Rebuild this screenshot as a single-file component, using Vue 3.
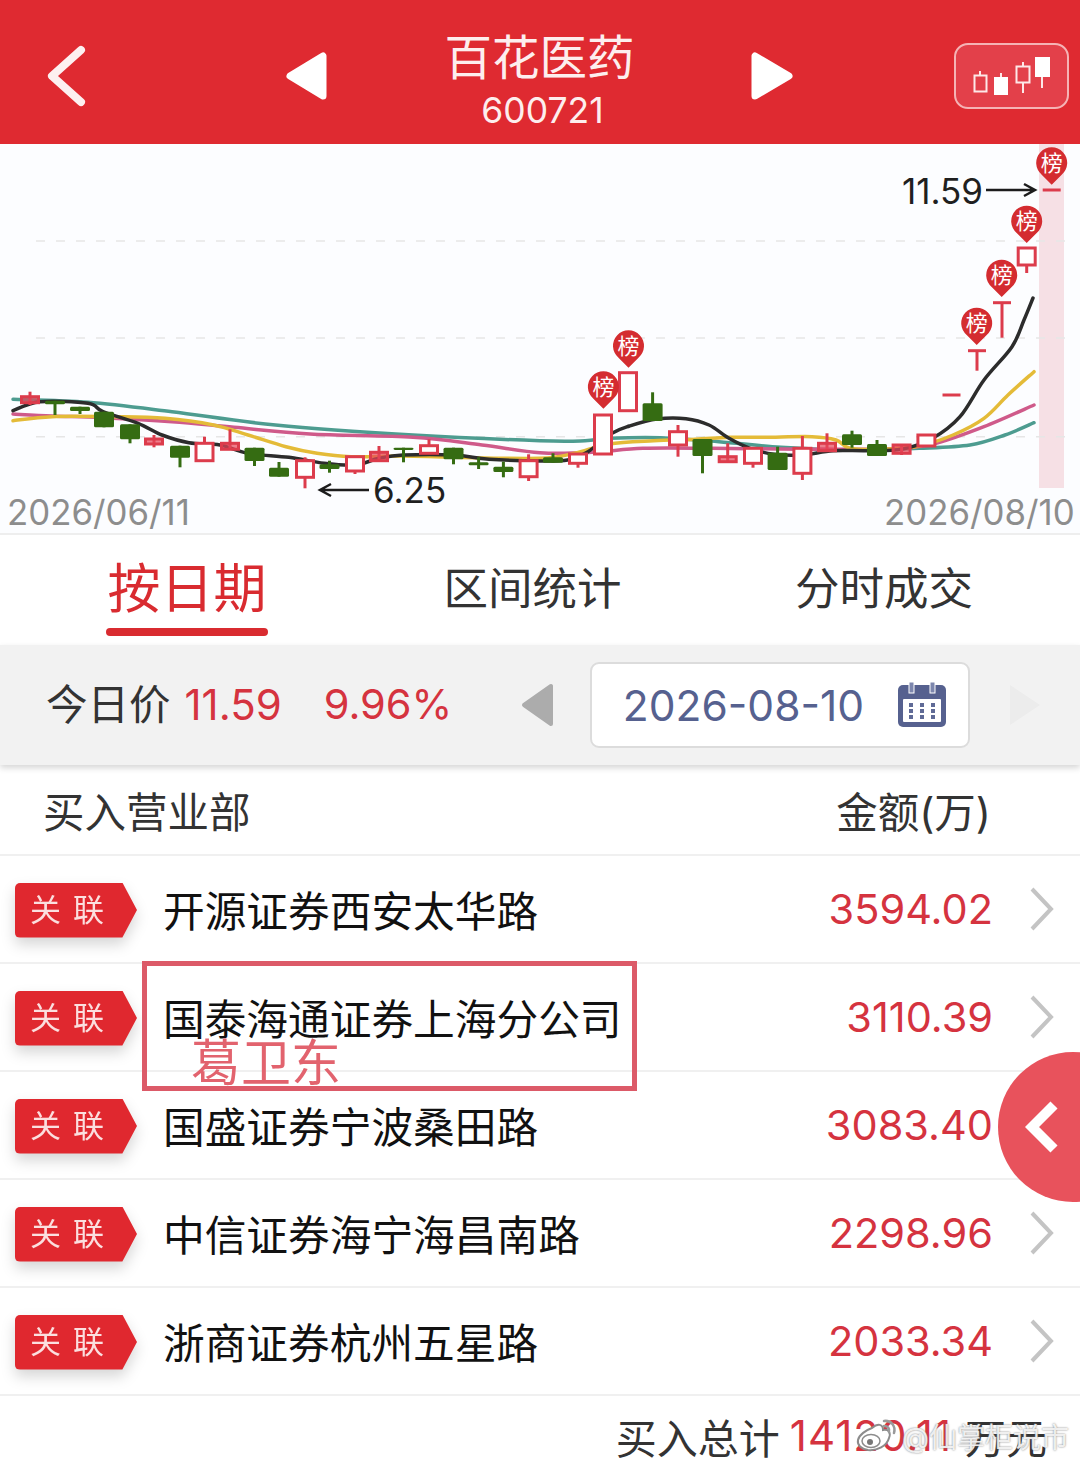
<script setup>
// g = green solid, h = hollow red, s = small red with see-through body
const candles = [
  [30, 396.7, 402.7, 391.7, 405, 's'], [55, 400.7, 404.3, 400.7, 415, 'g'], [80, 406.7, 411, 406.7, 414, 'g'],
  [104, 411.7, 427.3, 411.7, 427.3, 'g'], [130, 424.3, 439.3, 424.3, 443.3, 'g'], [154, 439, 444, 435, 447.3, 's'],
  [180, 445.7, 457.7, 445.7, 467.3, 'g'], [204.5, 443.3, 460.7, 436.7, 460.7, 'h'], [230, 443.3, 449.3, 429.3, 449.3, 's'],
  [254.5, 447.7, 461, 447.7, 466, 'g'], [279, 467.7, 476.7, 462, 476.7, 'g'], [305, 460.7, 477.3, 457.3, 488.3, 'h'],
  [329.5, 464.3, 469, 460.7, 472.7, 'g'], [355, 456.7, 471, 456.7, 474, 'h'], [379, 452.3, 460.7, 446, 460.7, 's'],
  [403.5, 447.7, 450, 447.7, 462.3, 'g'], [429, 445.7, 453.3, 439.3, 453.3, 'h'], [453.5, 447.7, 459.3, 447.7, 464.3, 'g'],
  [478.6, 462.3, 465.3, 457.3, 469, 'g'], [503.4, 466.7, 472, 461.7, 477.3, 'g'], [528.6, 460.7, 476.7, 454.3, 481, 'h'],
  [553, 457.3, 462.7, 453.3, 462.7, 'g'], [578, 454, 463.3, 454, 467.7, 'h'], [603, 415, 454, 415, 454, 'h'],
  [628, 372.7, 410.7, 372.7, 410.7, 'h'], [652.6, 403.3, 421, 392.3, 421, 'g'], [678, 431.7, 445, 425, 456.7, 'h'],
  [702.5, 439, 456, 439, 473.3, 'g'], [727.7, 456.7, 461.7, 443.3, 461.7, 's'], [753, 448.3, 463.3, 448.3, 467.7, 'h'],
  [777.6, 452.7, 470, 446.7, 470, 'g'], [802.4, 448.3, 473.3, 436, 480, 'h'], [827, 443.3, 450.7, 433.3, 450.7, 's'],
  [852, 434.3, 445, 430.7, 447.7, 'g'], [877, 444, 456, 440, 456, 'g'], [901.6, 445, 453.3, 445, 455, 's'],
  [926.4, 435, 446, 435, 446, 'h'], [951.5, 395, 395, 395, 395, 'h'], [977, 350.7, 350.7, 350.7, 370.7, 'h'],
  [1002, 302.7, 302.7, 302.7, 337.7, 'h'], [1026.7, 248, 265, 248, 273, 'h'], [1051.7, 190, 190, 190, 190, 'h'],
]

const lines = [
  { color: '#4d9c90', pts: [[13,399.3],[88,402.3],[172,411.7],[275.5,425],[413,435],[540,440.7],[585,440.7],[609,438.3],[660.5,437.7],[719,441.7],[781,447.3],[850,450],[919,448.3],[970,445],[1005,435],[1034,422.7]] },
  { color: '#cf5a8a', pts: [[13,414],[52,416],[103,417.7],[172,421.7],[234,427.3],[310,434],[413,437.3],[482,445],[540,452.7],[592,452.3],[643,448.3],[712,448.3],[781,449],[850,449.3],[901.6,448.3],[936,443.3],[984,426.7],[1034,405]] },
  { color: '#e4bb38', pts: [[13,420.7],[52,416.7],[113.6,416.7],[165,418.3],[213.5,425],[248,435],[286,446.7],[317,453.3],[351,456.7],[403,456],[454.5,457.3],[540,458.3],[574.4,453.3],[609,444],[653.6,440.7],[695,439.3],[729,437.3],[764,437.3],[812,436.7],[836,440],[850,448.3],[884,449.3],[919,446],[953,435],[984,418.3],[1008,395],[1034,371.7]] },
  { color: '#2c2c2c', pts: [[13,410.7],[40,401.7],[88,403.3],[103,411.7],[138,423.3],[162,435],[189,442.7],[220,445],[248,453.3],[289,457.3],[324,463.3],[355,465],[379,458.3],[403,455],[454.5,455],[489,459.3],[540,461],[567.5,460],[588,451.7],[612,433.3],[629.5,426],[657,419],[686,418.7],[709,425],[729,438.3],[750,448.3],[774,454.3],[802,455],[833,450.7],[867,450.7],[901.6,449.3],[932.6,438.3],[960,416.7],[984,380],[1012,346.7],[1024,320],[1033,298]] },
]

const pins = [[1051.7, 162.7], [1026.7, 221], [1001.7, 275], [976.7, 323], [628.5, 345.7], [603.4, 386.7]]

const rows = [
  { name: '开源证券西安太华路', amount: '3594.02' },
  { name: '国泰海通证券上海分公司', amount: '3110.39' },
  { name: '国盛证券宁波桑田路', amount: '3083.40' },
  { name: '中信证券海宁海昌南路', amount: '2298.96' },
  { name: '浙商证券杭州五星路', amount: '2033.34' },
]

function smooth(pts) {
  let d = `M${pts[0][0]} ${pts[0][1]}`
  for (let i = 0; i < pts.length - 1; i++) {
    const p0 = pts[i - 1] || pts[i]
    const p1 = pts[i]
    const p2 = pts[i + 1]
    const p3 = pts[i + 2] || p2
    const c1 = [p1[0] + (p2[0] - p0[0]) / 6, p1[1] + (p2[1] - p0[1]) / 6]
    const c2 = [p2[0] - (p3[0] - p1[0]) / 6, p2[1] - (p3[1] - p1[1]) / 6]
    d += ` C${c1[0]} ${c1[1]} ${c2[0]} ${c2[1]} ${p2[0]} ${p2[1]}`
  }
  return d
}

function pinPath(x, y) {
  const r = 15.5
  return `M${x - 10} ${y + 12} A${r} ${r} 0 1 1 ${x + 10} ${y + 12} L${x} ${y + 22} Z`
}
</script>

<template>
  <div class="page">
    <header class="topbar">
      <svg class="back" width="44" height="64" viewBox="0 0 44 64">
        <path d="M36 6 L7 32 L36 58" fill="none" stroke="#fdf0f0" stroke-width="8" stroke-linecap="round" stroke-linejoin="round" />
      </svg>
      <svg class="tri-left" width="44" height="50" viewBox="0 0 44 50">
        <path d="M39 5 V45 L6 25 Z" fill="#fff" stroke="#fff" stroke-width="7" stroke-linejoin="round" />
      </svg>
      <div class="title">
        <div class="title-name">百花医药</div>
        <div class="title-code">600721</div>
      </div>
      <svg class="tri-right" width="44" height="50" viewBox="0 0 44 50">
        <path d="M4 5 V45 L38 25 Z" fill="#fff" stroke="#fff" stroke-width="7" stroke-linejoin="round" />
      </svg>
      <div class="kline-btn">
        <svg width="115" height="66" viewBox="955 43 115 66">
          <path d="M981 71V75M1002 73V78M1024 62V66M1024 83V93M1043 77V88" stroke="#fde8e8" stroke-width="2" />
          <rect x="975.5" y="75.5" width="12" height="16" fill="none" stroke="#fde8e8" stroke-width="2" />
          <rect x="995" y="77" width="14" height="18" fill="#fff" />
          <rect x="1017.5" y="66.5" width="13" height="16" fill="none" stroke="#fde8e8" stroke-width="2" />
          <rect x="1036" y="57" width="15" height="20" fill="#fff" />
        </svg>
      </div>
    </header>

    <svg class="chart" width="1080" height="389" viewBox="0 144 1080 389">
      <rect x="1039" y="144" width="25" height="344" fill="#f6e0e5" />
      <path v-for="y in [241, 338, 436.7]" :key="y" :d="`M36 ${y}H1076`" stroke="#e6e6e6" stroke-width="1.5" stroke-dasharray="9 11" />
      <path v-for="l in lines" :key="l.color" :d="smooth(l.pts)" fill="none" :stroke="l.color" stroke-width="3.5" stroke-linecap="round" />
      <g v-for="c in candles" :key="c[0]">
        <path :d="`M${c[0]} ${c[3]}V${c[4]}`" :stroke="c[5] === 'g' ? '#356c12' : '#dc3c4c'" stroke-width="3" />
        <path v-if="c[1] === c[2]" :d="`M${c[0] - 9} ${c[1]}H${c[0] + 9}`" stroke="#dc3c4c" stroke-width="3" />
        <rect v-else-if="c[5] === 'g'" :x="c[0] - 10" :y="c[1]" width="20" :height="c[2] - c[1]" rx="1.5" fill="#356c12" />
        <rect v-else :x="c[0] - 8.5" :y="c[1]" width="17" :height="c[2] - c[1]" :fill="c[5] === 'h' ? '#fff' : 'rgba(232,70,90,0.7)'" stroke="#dc3c4c" stroke-width="3" />
      </g>
      <g v-for="p in pins" :key="p[0]">
        <path :d="pinPath(p[0], p[1])" fill="#d42c30" />
        <text class="pin-text" :x="p[0]" :y="p[1] + 8">榜</text>
      </g>
      <text class="price-label" x="902" y="204">11.59</text>
      <path d="M986 190H1034M1024 184L1035 190L1024 196" fill="none" stroke="#1c1c1c" stroke-width="2.5" />
      <text class="price-label" x="373" y="503">6.25</text>
      <path d="M369 490H321M331 484L320 490L331 496" fill="none" stroke="#1c1c1c" stroke-width="2.5" />
      <text class="date-label" x="7" y="525">2026/06/11</text>
      <text class="date-label" x="884" y="525">2026/08/10</text>
    </svg>

    <nav class="tabs">
      <div class="tab active">按日期</div>
      <div class="tab">区间统计</div>
      <div class="tab">分时成交</div>
    </nav>

    <section class="pricebar">
      <span class="today">今日价</span>
      <span class="red price">11.59</span>
      <span class="red pct">9.96%</span>
      <svg class="date-prev" width="34" height="44" viewBox="0 0 34 44">
        <path d="M31 3V41L4 22Z" fill="#acacac" stroke="#acacac" stroke-width="4" stroke-linejoin="round" />
      </svg>
      <div class="datebox">
        <span class="date">2026-08-10</span>
        <svg width="50" height="46" viewBox="0 0 50 46">
          <rect x="1" y="3" width="48" height="42" rx="5" fill="#56618f" />
          <rect x="6" y="17" width="38" height="23" rx="1" fill="#fff" />
          <g fill="#5f6a96">
            <rect x="12" y="21" width="4" height="4" /><rect x="23" y="21" width="4" height="4" /><rect x="34" y="21" width="4" height="4" />
            <rect x="12" y="27" width="4" height="4" /><rect x="23" y="27" width="4" height="4" /><rect x="34" y="27" width="4" height="4" />
            <rect x="12" y="33" width="4" height="4" /><rect x="23" y="33" width="4" height="4" /><rect x="34" y="33" width="4" height="4" />
          </g>
          <rect x="12" y="0" width="5" height="11" fill="#7c86ad" stroke="#fff" stroke-width="1" />
          <rect x="33" y="0" width="5" height="11" fill="#7c86ad" stroke="#fff" stroke-width="1" />
        </svg>
      </div>
      <svg class="date-next" width="34" height="44" viewBox="0 0 34 44">
        <path d="M2 2V42L32 22Z" fill="#ececec" />
      </svg>
    </section>

    <div class="list-head">
      <span>买入营业部</span>
      <span>金额(万)</span>
    </div>

    <div v-for="r in rows" :key="r.name" class="row">
      <div class="tag-wrap">
        <div class="tag"><span>关</span><span>联</span></div>
      </div>
      <div class="name">{{ r.name }}</div>
      <div class="amount">{{ r.amount }}</div>
      <svg class="more" width="26" height="44" viewBox="0 0 26 44">
        <path d="M4 2L23 22L4 42" fill="none" stroke="#c4c4c4" stroke-width="4" />
      </svg>
    </div>

    <div class="total">
      <span>买入总计</span>
      <span class="red total-num">14120.11</span>
      <span>万元</span>
    </div>

    <!-- hand-drawn mark on top of the screenshot -->
    <div class="mark"><span>葛卫东</span></div>

    <div class="float-btn">
      <svg width="36" height="52" viewBox="0 0 36 52">
        <path d="M29 4L7 26L29 48" fill="none" stroke="#fff" stroke-width="10" />
      </svg>
    </div>

    <div class="watermark">
      <svg width="42" height="36" viewBox="0 0 42 36">
        <path d="M16 10C22 5 27 6 27 12C33 11 35 15 33 20C31 28 21 33 12 32C5 31 1 27 2 22C3 17 10 12 16 10Z" fill="#fff" stroke="#8c8c8c" stroke-width="2" />
        <ellipse cx="15" cy="23" rx="9" ry="6.5" fill="#fff" stroke="#8c8c8c" stroke-width="1.5" />
        <circle cx="14" cy="24" r="3" fill="#777" />
        <path d="M28 3C35 2 40 8 38 15M28 8C32 8 34 11 33 14" fill="none" stroke="#9a9a9a" stroke-width="2.5" stroke-linecap="round" />
      </svg>
      <span>@仙掌柜说市</span>
    </div>
  </div>
</template>

<style>
html,
body {
  margin: 0;
  background: #fff;
}
</style>

<style scoped>
.page {
  position: relative;
  width: 1080px;
  height: 1464px;
  overflow: hidden;
  background: #fff;
  font-family: Inter, "Noto Sans CJK SC", sans-serif;
  color: #333;
}

.topbar {
  display: flex;
  align-items: center;
  height: 144px;
  padding-left: 45px;
  box-sizing: border-box;
  background: #df2a31;
}
.back {
  margin-top: 8px;
}
.tri-left {
  margin-left: 195px;
  margin-top: 8px;
}
.title {
  width: 423px;
  text-align: center;
  color: #fdeeee;
  padding-top: 20px;
}
.title-name {
  font-size: 47.5px;
  line-height: 54px;
}
.title-code {
  font-size: 35.5px;
  line-height: 46px;
  padding-left: 6px;
  margin-top: 3px;
}
.tri-right {
  margin-top: 8px;
}
.kline-btn {
  width: 115px;
  height: 66px;
  margin-left: 159px;
  margin-top: 8px;
  border: 2px solid #f5b3b5;
  border-radius: 14px;
  box-sizing: border-box;
  background: #e3404a;
  overflow: hidden;
}
.kline-btn svg {
  display: block;
  margin: -2px;
}

.chart {
  display: block;
  background: #fcfdff;
}
.pin-text {
  font-size: 22px;
  fill: #fff;
  text-anchor: middle;
  font-family: "Noto Sans CJK SC", sans-serif;
}
.price-label {
  font-size: 35px;
  fill: #1f1f1f;
}
.date-label {
  font-size: 34.8px;
  fill: #8d8d8d;
}

.tabs {
  display: grid;
  grid-template-columns: 348px 343px 360px;
  height: 112px;
  padding-left: 13px;
  box-sizing: border-box;
  border-top: 2px solid #eeeeee;
  background: #fff;
}
.tab {
  position: relative;
  text-align: center;
  font-size: 44.5px;
  line-height: 108px;
}
.tab.active {
  font-size: 53px;
  color: #d92b30;
}
.tab.active::after {
  content: "";
  position: absolute;
  left: 93px;
  bottom: 9px;
  width: 162px;
  height: 8px;
  border-radius: 4px;
  background: #d92b30;
}

.pricebar {
  display: flex;
  align-items: center;
  height: 120px;
  padding-left: 46px;
  box-sizing: border-box;
  background: #f2f2f2;
  box-shadow: 0 3px 6px rgba(0, 0, 0, 0.16);
  position: relative;
}
.today {
  font-size: 41.5px;
  margin-top: -6px;
}
.red {
  color: #d5333f;
}
.price {
  font-size: 42px;
  margin-left: 14px;
  margin-top: -2px;
}
.pct {
  font-size: 41.5px;
  margin-left: 42px;
  width: 125px;
  margin-top: -2px;
}
.date-prev {
  margin-left: 71px;
}
.datebox {
  display: flex;
  align-items: center;
  justify-content: space-between;
  width: 380px;
  height: 86px;
  margin-left: 36px;
  padding: 0 21px 0 31px;
  box-sizing: border-box;
  border: 2px solid #dcdcdc;
  border-radius: 9px;
  background: #fff;
}
.date {
  font-size: 42.5px;
  color: #56618f;
}
.date-next {
  margin-left: 38px;
}

.list-head {
  display: flex;
  align-items: center;
  justify-content: space-between;
  height: 91px;
  padding: 0 89px 0 43px;
  box-sizing: border-box;
  font-size: 41.5px;
  border-bottom: 2px solid #f0f0f0;
}

.row {
  display: flex;
  align-items: center;
  height: 108px;
  padding-left: 15px;
  box-sizing: border-box;
  border-bottom: 2px solid #f0f0f0;
}
.tag-wrap {
  margin-top: 2px;
  filter: drop-shadow(0 7px 7px rgba(0, 0, 0, 0.16));
}
.tag {
  display: flex;
  gap: 12px;
  width: 122px;
  height: 55px;
  padding-left: 15px;
  box-sizing: border-box;
  align-items: center;
  font-size: 31px;
  color: #fbdfdf;
  background: #e0282f;
  border-radius: 5px 0 0 5px;
  clip-path: polygon(0 0, 88% 0, 100% 50%, 88% 100%, 0 100%);
}
.tag span {
  margin-top: -5px;
}
.name {
  flex: 1;
  margin-left: 26px;
  font-size: 41.7px;
  color: #111;
}
.amount {
  font-size: 41.5px;
  color: #d5333f;
}
.more {
  margin: 0 26px 0 35px;
}

.total {
  display: flex;
  align-items: center;
  justify-content: flex-end;
  height: 69px;
  padding: 10px 33px 0 0;
  box-sizing: border-box;
  font-size: 41px;
}
.total-num {
  font-size: 42px;
  letter-spacing: 1px;
  margin: 0 13px 0 10px;
}

.mark {
  position: absolute;
  left: 142px;
  top: 961px;
  width: 495px;
  height: 130px;
  box-sizing: border-box;
  border: 5px solid #dc5a68;
}
.mark span {
  position: absolute;
  left: 44px;
  top: 63px;
  font-size: 50px;
  line-height: 60px;
  color: #e2636e;
  font-family: "Noto Sans CJK SC", sans-serif;
}

.float-btn {
  position: absolute;
  left: 998px;
  top: 1052px;
  width: 150px;
  height: 150px;
  border-radius: 50%;
  background: #e8525c;
  display: flex;
  align-items: center;
  padding-left: 27px;
  box-sizing: border-box;
}

.watermark {
  position: absolute;
  left: 856px;
  top: 1416px;
  display: flex;
  align-items: center;
  gap: 4px;
  font-size: 28px;
  color: rgba(255, 255, 255, 0.85);
  text-shadow: 0 0 2px #777;
}
</style>
